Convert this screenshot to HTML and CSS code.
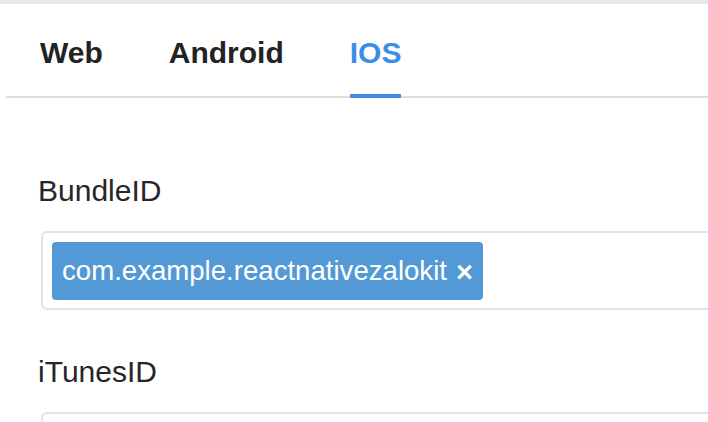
FILE: index.html
```html
<!DOCTYPE html>
<html>
<head>
<meta charset="utf-8">
<link rel="stylesheet" href="styles.css">
</head>
<body>
<div class="topband"></div>
<div class="tabs">
  <div class="tab">Web</div>
  <div class="tab">Android</div>
  <div class="tab active">IOS</div>
</div>
<div class="form">
  <div class="label">BundleID</div>
  <div class="field-input">
    <span class="tag">com.example.reactnativezalokit<span class="tag-x">×</span></span>
  </div>
  <div class="label second">iTunesID</div>
  <div class="field-input empty"></div>
</div>
</body>
</html>
```
FILE: styles.css
```css
html, body {
  margin: 0;
  padding: 0;
  background: #ffffff;
  overflow: hidden;
  font-family: "Liberation Sans", Arial, sans-serif;
}
body {
  width: 708px;
  height: 422px;
}
.topband {
  height: 4px;
  background: #e6e9f0;
}
.tabs {
  display: flex;
  gap: 66px;
  margin-left: 6px;
  padding-left: 34px;
  padding-top: 33px;
  border-bottom: 2px solid #dddddd;
}
.tab {
  font-size: 30px;
  font-weight: bold;
  line-height: 32px;
  color: #232323;
  padding-bottom: 25px;
  border-bottom: 4px solid transparent;
  margin-bottom: -2px;
}
.tab.active {
  color: #3a8ee6;
  border-bottom-color: #3d8fe8;
}
.form {
  padding-left: 38px;
  padding-top: 77px;
}
.label {
  font-size: 30px;
  line-height: 32px;
  color: #262626;
  margin-bottom: 24px;
}
.label.second {
  margin-top: 46px;
}
.field-input {
  margin-left: 3px;
  width: 720px;
  box-sizing: border-box;
  border: 2px solid #dbe3ec;
  border-radius: 6px;
  padding: 9px 9px 8px 9px;
  display: flex;
}
.field-input.empty {
  height: 79px;
}
.tag {
  display: inline-flex;
  align-items: center;
  height: 58px;
  box-sizing: border-box;
  padding: 0 10px 0 10px;
  background: #5299d6;
  border-radius: 4px;
  color: #ffffff;
  font-size: 27.6px;
}
.tag-x {
  font-weight: bold;
  font-size: 29px;
  margin-left: 9px;
  line-height: 1;
  position: relative;
  top: 1px;
}
```
